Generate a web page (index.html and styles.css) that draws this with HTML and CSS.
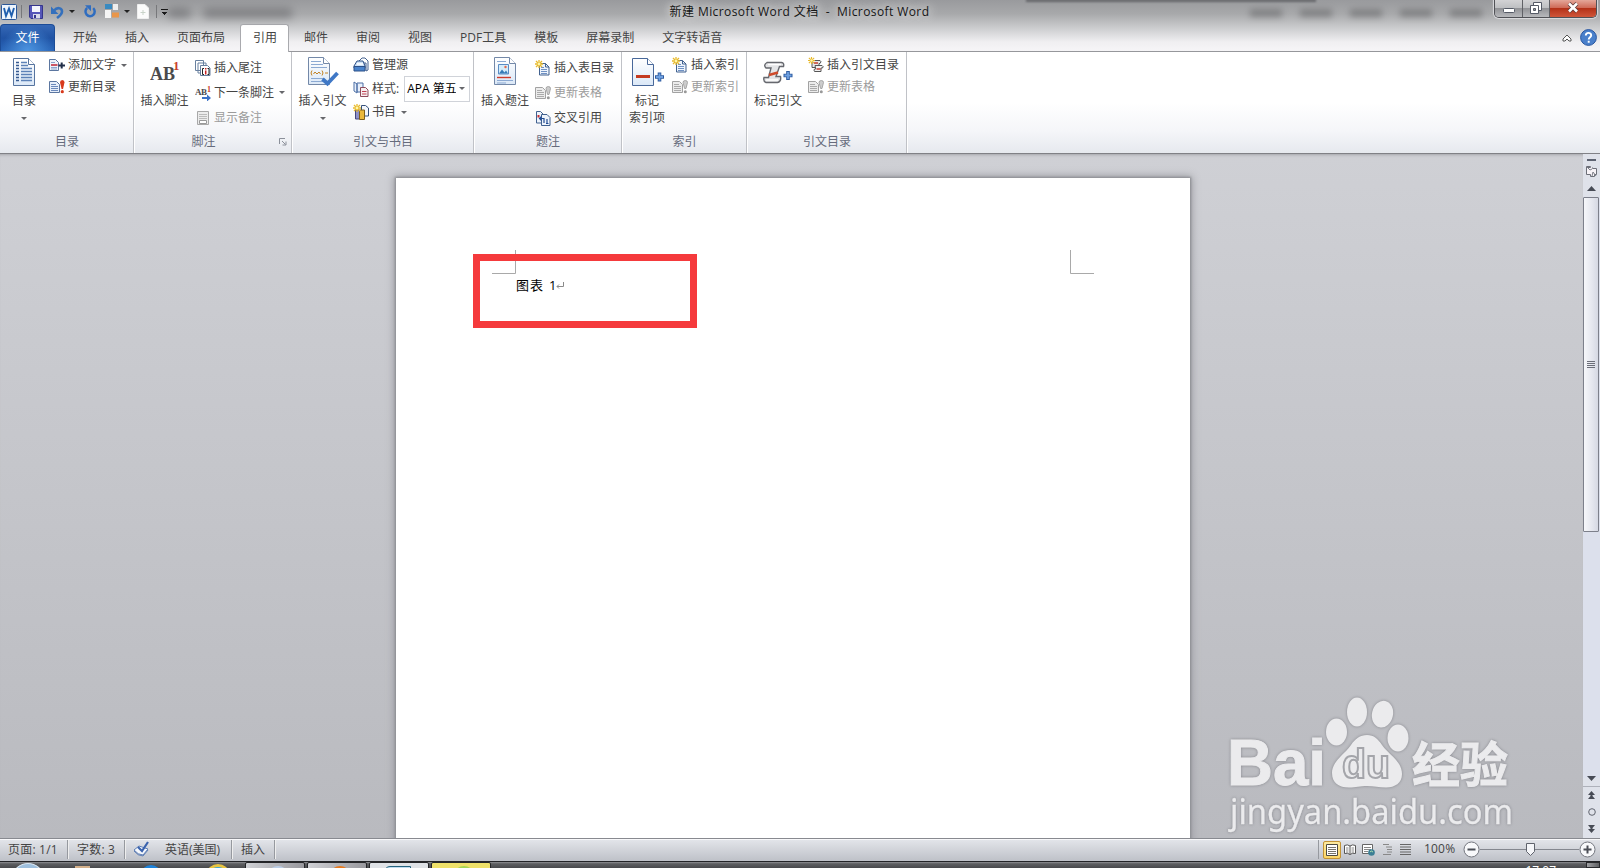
FILE: index.html
```
<!DOCTYPE html>
<html lang="zh-CN">
<head>
  <meta charset="UTF-8">
  <meta name="viewport" content="width=device-width, initial-scale=1.0">
  <title>新建 Microsoft Word 文档 - Microsoft Word</title>
  <link rel="stylesheet" href="styles.css">
</head>
<body>
  <svg class="defs" width="0" height="0">
    <defs>
      <linearGradient id="paper" x1="0" y1="0" x2="0" y2="1">
        <stop offset="0" stop-color="#fff"/><stop offset="1" stop-color="#dbe8f7"/>
      </linearGradient>
      <linearGradient id="blue" x1="0" y1="0" x2="0" y2="1">
        <stop offset="0" stop-color="#7fb0ea"/><stop offset="1" stop-color="#2558a8"/>
      </linearGradient>
      <symbol id="star" viewBox="0 0 8 8"><path d="M4 0v8M0 4h8M1 1l6 6M7 1L1 7" stroke="#e8b92c" stroke-width="1.3"/><circle cx="4" cy="4" r="1.4" fill="#fff6a8"/></symbol>
      <symbol id="add-text" viewBox="0 0 16 14">
        <path d="M.5 1.500h6l3 3v8h-9z" fill="#eef4fb" stroke="#5b76a0"/>
        <path d="M2 4.500h4M2 9.500h6M2 11h6" stroke="#8ba5cc"/><path d="M2 7h6.500" stroke="#c23040" stroke-width="1.600"/>
        <path d="M9.500 7.500H16M12.700 4.500v6" stroke="#222f49" stroke-width="2"/>
      </symbol>
      <symbol id="update" viewBox="0 0 16 14">
        <path d="M.5 1.500h7l3 3v8h-10z" fill="#e6eefa" stroke="#5b76a0"/>
        <path d="M2 4.500h5M2 6.500h7M2 8.500h7M2 10.500h7" stroke="#6b89bb"/>
        <path d="M11 2.500Q11 0 13.300 0t2.200 2.500l-1.500 6.500h-1.400z" fill="#d8391c"/><circle cx="13.300" cy="11.700" r="1.600" fill="#d8391c"/>
      </symbol>
      <symbol id="update-off" viewBox="0 0 16 14">
        <path d="M.5 1.500h7l3 3v8h-10z" fill="#ececec" stroke="#a2a2a2"/>
        <path d="M2 4.500h5M2 6.500h7M2 8.500h7M2 10.500h7" stroke="#aaa"/>
        <path d="M11 2.500Q11 .5 13.300.5t2.200 2l-1.500 6h-1.400z" fill="#ccc" stroke="#999" stroke-width=".8"/><circle cx="13.300" cy="11.700" r="1.500" fill="#999"/>
      </symbol>
      <symbol id="new-list" viewBox="0 0 16 16">
        <path d="M4.500 3.500h6l3.500 3.500v8H4.500z" fill="#eef4fc" stroke="#41618f"/><path d="M10.500 3.500V7H14" fill="none" stroke="#41618f"/>
        <path d="M6 7.500h3M6 9.500h6M6 11.500h6M6 13.500h6" stroke="#6f91c4"/>
        <use href="#star" x="0" y="0" width="8" height="8"/>
      </symbol>
    </defs>
  </svg>

  <header class="titlebar">
    <div class="quick-access">
      <svg width="16" height="16" viewBox="0 0 16 16"><rect x=".5" y=".5" width="15" height="15" rx="1" fill="#eef5fc" stroke="#2b5797"/><path d="M3 4l2 8 3-7.500 2.500 7.500L13 4" fill="none" stroke="#1f5fae" stroke-width="1.900"/></svg>
      <i class="bar"></i>
      <svg class="save" width="14" height="14" viewBox="0 0 14 14"><path d="M.5.500h13v13H2l-1.500-1.500z" fill="#5556b8" stroke="#34358c"/><path d="M3 1h8v6H3z" fill="#f3f5fc"/><path d="M4 9h7v4.500H4z" fill="#d9dcea"/><path d="M5 10h2v3H5z" fill="#34358c"/></svg>
      <svg class="undo" width="13" height="14" viewBox="0 0 13 14"><path d="M3 5.500C6 2 11 2.500 11 6.500c0 3-2.500 4.500-5 6.500" fill="none" stroke="#3470bd" stroke-width="2.600"/><path d="M0 1.500V9h7.500z" fill="#3470bd"/></svg>
      <i class="caret dark"></i>
      <svg class="redo" width="13" height="13" viewBox="0 0 13 13"><path d="M9.200 3.200a4.600 4.600 0 1 1-6-.2" fill="none" stroke="#2f6dc0" stroke-width="2.500"/><path d="M1 .300h6v6z" fill="#2f6dc0"/></svg>
      <svg class="shapes" width="15" height="15" viewBox="0 0 15 15"><rect width="7" height="5" fill="#3a8ac0"/><rect x="0" y="6" width="6" height="8" fill="#f5f5f5"/><rect x="8" y="0" width="5" height="6" fill="#eee"/><rect x="7" y="8.500" width="7" height="5" fill="#e9964a"/></svg>
      <i class="caret dark"></i>
      <svg class="blank" width="12" height="15" viewBox="0 0 12 15"><path d="M.5.500h7.500l3.500 3.500v10.500H.5z" fill="#fbfbfb" stroke="#eee"/><path d="M6 6v5M3.500 8.500h5" stroke="#c9d3c9"/></svg>
      <i class="bar last"></i>
      <i class="more"></i>
    </div>
    <div class="ghost-left"></div>
    <div class="title">新建 Microsoft Word 文档&nbsp; -&nbsp; Microsoft Word</div>
    <div class="ghost-right"><i></i><i></i><i></i><i></i><i></i></div>
    <div class="top-strip"></div>
    <div class="window-buttons">
      <span class="minimize"><svg width="12" height="5"><rect x=".5" y=".5" width="11" height="4" rx="1" fill="#fff" stroke="#555a66"/></svg></span>
      <span class="restore"><svg width="12" height="12"><path d="M3.500 3V.500h8v8H9" fill="#fff" stroke="#555a66"/><path d="M.5 3.500h8v8h-8z" fill="#fff" stroke="#555a66"/><path d="M3.500 6.500h2v2h-2z" fill="#999" stroke="#555a66"/></svg></span>
      <span class="close"><svg width="12" height="11"><path d="M2 1.500l8 8M10 1.500l-8 8" stroke="#5b3a3a" stroke-width="4"/><path d="M2 1.500l8 8M10 1.500l-8 8" stroke="#fff" stroke-width="2.600"/></svg></span>
    </div>
  </header>

  <nav class="tabs">
    <a class="file">文件</a>
    <a>开始</a>
    <a>插入</a>
    <a>页面布局</a>
    <a class="active">引用</a>
    <a>邮件</a>
    <a>审阅</a>
    <a>视图</a>
    <a>PDF工具</a>
    <a>模板</a>
    <a>屏幕录制</a>
    <a>文字转语音</a>
    <div class="tab-tools">
      <svg width="10" height="8" viewBox="0 0 10 8"><path d="M1 5L5 1l4 4v2H7L5 5 3 7H1z" fill="#fff" stroke="#555" /></svg>
      <svg width="17" height="17" viewBox="0 0 17 17"><circle cx="8.500" cy="8.500" r="7.900" fill="#4a80cb" stroke="#2a57a0"/><path d="M5.800 6.500c0-3.600 5.400-3.400 5.400-.3 0 2-2.500 2-2.500 4.300M8.700 11.800v2" fill="none" stroke="#fff" stroke-width="1.900"/></svg>
    </div>
  </nav>

  <section class="ribbon">
    <div class="group toc">
      <div class="tools">
        <div class="big">
          <svg width="24" height="31" viewBox="0 0 24 31"><path d="M1.500 1.500h15l6 6v21h-21z" fill="url(#paper)" stroke="#56749f"/><path d="M16.500 1.500v6h6" fill="#fff" stroke="#56749f"/><path d="M4 5.500h3M4 8.500h3M4 11.500h3M4 14.500h3M4 17.500h3M4 20.500h3M4 23.500h3" stroke="#365a91" stroke-width="1.300"/><path d="M9 5.500h6M9 8.500h7M9 11.500h11M9 14.500h11M9 17.500h11M9 20.500h11M9 23.500h11" stroke="#5d82b7" stroke-width="1.300"/></svg>
          <span>目录</span><i class="caret"></i>
        </div>
        <div class="list two">
          <div class="item"><svg width="16" height="14"><use href="#add-text"/></svg>添加文字<i class="caret"></i></div>
          <div class="item"><svg width="16" height="14"><use href="#update"/></svg>更新目录</div>
        </div>
      </div>
      <div class="name">目录</div>
    </div>

    <div class="group footnotes">
      <div class="tools">
        <div class="big">
          <svg width="30" height="31" viewBox="0 0 30 31"><text class="ab" x="0" y="23" textLength="25">AB</text><text class="ab-one" x="23" y="13">1</text></svg>
          <span>插入脚注</span>
        </div>
        <div class="list three">
          <div class="item"><svg width="16" height="16" viewBox="0 0 16 16"><path d="M.5.500h8v10h-8zM3 3h8v10H3z" fill="#fff" stroke="#68809f"/><path d="M5.500 5.500h7l2.500 2.500v7.500H5.500z" fill="#fff" stroke="#68809f"/><path d="M9 8.500H7.500v6H9M12.500 8.500H14v6h-1.500" fill="none" stroke="#222"/><path d="M10.700 8v1.500M10.700 10.500v4" stroke="#c22" stroke-width="1.500"/></svg>插入尾注</div>
          <div class="item"><svg width="16" height="16" viewBox="0 0 16 16"><text class="ab small" x="0" y="10" textLength="12">AB</text><text class="ab-one small" x="12" y="7">1</text><path d="M7 12h5V9.500l4 3.500-4 3.500V14H7z" fill="#3c72c8"/></svg>下一条脚注<i class="caret"></i></div>
          <div class="item off"><svg width="16" height="16" viewBox="0 0 16 16"><path d="M2.500 1.500h11v13h-11z" fill="#ececec" stroke="#a8a8a8"/><path d="M4 4.500h8M4 6.500h8M4 8.500h8" stroke="#bbb"/><path d="M4.500 10.500h7v3h-7z" fill="#fff" stroke="#999"/></svg>显示备注</div>
        </div>
      </div>
      <div class="name">脚注</div>
      <svg class="launcher" width="8" height="8"><path d="M.5 6V.500H6" fill="none" stroke="#8b909a"/><path d="M3 3l3.500 3.500M7 3.500V7H3.500" fill="none" stroke="#8b909a"/></svg>
    </div>

    <div class="group citations">
      <div class="tools">
        <div class="big">
          <svg width="32" height="31" viewBox="0 0 32 31"><path d="M1.500.500h15l6 6v21h-21z" fill="url(#paper)" stroke="#7388a8"/><path d="M16.500.500v6h6" fill="#fff" stroke="#7388a8"/><path d="M4 4.500h10M4 7.500h12M4 10.500h16M4 21.500h13M4 24.500h12" stroke="#8ba9d2"/><path d="M5 13.500q-2 2.500 0 5M15 13.500q2 2.500 0 5" stroke="#c28324" fill="none"/><path d="M6.500 17l1.500-2 2 2 2-2 1.500 2M18 16h3" stroke="#c28324" fill="none"/><path d="M15.500 22l5 4.500L30.500 16" stroke="#3f78c6" stroke-width="3.800" fill="none"/></svg>
          <span>插入引文</span><i class="caret"></i>
        </div>
        <div class="list mid">
          <div class="item"><svg width="16" height="16" viewBox="0 0 16 16"><path d="M6 4l3-3h3l3 3v9l-2 1V6H6z" fill="#fff" stroke="#44618f"/><path d="M1 9l3-5h6l2 5v2H1z" fill="#cfe2f7" stroke="#2c5088"/><path d="M1 9.500h11v4.500H1z" fill="#4a83cc" stroke="#2c5088"/><path d="M4 7h6" stroke="#fff" stroke-width="1.500"/></svg>管理源</div>
          <div class="item"><svg width="16" height="16" viewBox="0 0 16 16"><path d="M1 1l3 2v9l-3-2zM4 2h6v9H4z" fill="#e8f0fb" stroke="#4c6fa5"/><path d="M7.500 6.500h5l2.500 2.500v6.500H7.500z" fill="#f7eff0" stroke="#8d4b5b"/><path d="M9 10.500h4.500M9 13h4.500" stroke="#c04052"/></svg>样式:<div class="combo"><span>APA 第五</span><i class="caret"></i></div></div>
          <div class="item"><svg width="16" height="16" viewBox="0 0 16 16"><path d="M2.500 6h4v9h-4z" fill="#8e90c8" stroke="#44477f"/><path d="M8.500 1.500h4l3 2.500v8H8.500z" fill="#f2f6fc" stroke="#35507a"/><path d="M6.500 6h5v9.500h-5z" fill="#eab83c" stroke="#80601a"/><use href="#star" x="0" y="0" width="8" height="8"/></svg>书目<i class="caret"></i></div>
        </div>
      </div>
      <div class="name">引文与书目</div>
    </div>

    <div class="group captions">
      <div class="tools">
        <div class="big">
          <svg width="24" height="31" viewBox="0 0 24 31"><path d="M1.500.500h15l6 6v21h-21z" fill="url(#paper)" stroke="#7388a8"/><path d="M16.500.500v6h6" fill="#fff" stroke="#7388a8"/><path d="M4 4.500h9M4 23.500h16M4 26h9" stroke="#8ba9d2"/><path d="M5.500 7.500h10v9.500h-10z" fill="#d5ecfa" stroke="#5a8cc4"/><path d="M6 16.500l3-4 2.500 3 1.500-2 2 3z" fill="#367bb8"/><circle cx="12.500" cy="10" r="1.200" fill="#e0664a"/><path d="M4 20.500h14" stroke="#ce3a2b" stroke-width="1.400"/></svg>
          <span>插入题注</span>
        </div>
        <div class="list three">
          <div class="item"><svg width="16" height="16"><use href="#new-list"/></svg>插入表目录</div>
          <div class="item off"><svg width="16" height="14"><use href="#update-off"/></svg>更新表格</div>
          <div class="item"><svg width="16" height="16" viewBox="0 0 16 16"><path d="M1.500 1.500h4l2.500 2.500v9H1.500z" fill="#eef4fc" stroke="#41618f"/><path d="M6.500 4.500h5.500l3 3v8H6.500z" fill="#eef4fc" stroke="#41618f"/><path d="M2.500 5h2v2.500h-2z" fill="#c42f35"/><path d="M9 13V8.500H4.500M6.500 6.500l-2 2 2 2" stroke="#234d94" stroke-width="1.200" fill="none"/><path d="M12 9v4.500M11 13.500h2.500" stroke="#234d94" stroke-width="1.200"/></svg>交叉引用</div>
        </div>
      </div>
      <div class="name">题注</div>
    </div>

    <div class="group index">
      <div class="tools">
        <div class="big">
          <svg width="33" height="31" viewBox="0 0 33 31"><path d="M1.500 1.500h15l6 6v21h-21z" fill="url(#paper)" stroke="#48689a"/><path d="M16.500 1.500v6h6" fill="#fff" stroke="#48689a"/><path d="M5 19.500h14" stroke="#c43a20" stroke-width="3"/><path d="M28.500 15.500v9M24 20h9" stroke="#2d5a9f" stroke-width="3.600"/><path d="M28.500 16.500v7M25 20h7" stroke="#6ea0e0" stroke-width="1.800"/></svg>
          <span>标记</span><span>索引项</span>
        </div>
        <div class="list two">
          <div class="item"><svg width="16" height="16"><use href="#new-list"/></svg>插入索引</div>
          <div class="item off"><svg width="16" height="14"><use href="#update-off"/></svg>更新索引</div>
        </div>
      </div>
      <div class="name">索引</div>
    </div>

    <div class="group authorities">
      <div class="tools">
        <div class="big">
          <svg width="30" height="31" viewBox="0 0 30 31"><path d="M4 5.500h14.500q3 .5 2 4h-4L13 19.500h4.500q1 5-3 6H3q-3-1-2-5h4.500L8 11H3Q0 8 4 5.500z" fill="#e4e5e7" stroke="#66686e" stroke-width="1.400"/><path d="M5 7.500h13M3 23h12" stroke="#fff" stroke-width="1.500"/><path d="M6 18l9-2.500" stroke="#cf4a2a" stroke-width="2.600"/><path d="M25 14v9M20.500 18.500h9" stroke="#2d5a9f" stroke-width="3.600"/><path d="M25 15v7M21.500 18.500h7" stroke="#6ea0e0" stroke-width="1.800"/></svg>
          <span>标记引文</span>
        </div>
        <div class="list two">
          <div class="item"><svg width="16" height="16" viewBox="0 0 16 16"><path d="M4 3.500h8q2 1 0 3h-1v4H4z" fill="#e8e8ea" stroke="#555"/><path d="M7 8.500h7q2 1 .500 2.500H13v3.500H6.500q-1-1.500 0-2.500h1.200z" fill="#f1f1f1" stroke="#555"/><path d="M6 6h4M8.500 12h4" stroke="#c43b30" stroke-width="1.700"/><use href="#star" x="0" y="0" width="7" height="7"/></svg>插入引文目录</div>
          <div class="item off"><svg width="16" height="14"><use href="#update-off"/></svg>更新表格</div>
        </div>
      </div>
      <div class="name">引文目录</div>
    </div>
  </section>

  <main class="workspace">
    <div class="canvas">
      <article class="page">
        <svg class="corner corner-left" width="24" height="25"><path d="M23.500 0v23.500H0" fill="none" stroke="#a9a9a9"/></svg>
        <svg class="corner corner-right" width="24" height="25"><path d="M.5 0v23.500H24" fill="none" stroke="#a9a9a9"/></svg>
        <p class="caption">图表 <b>1</b><svg width="8" height="7" viewBox="0 0 8 7"><path d="M7.500 0v4.500H1M3 2.500l-2 2 2 2" fill="none" stroke="#8a8a8a"/></svg></p>
        <div class="highlight"></div>
      </article>
      <svg class="watermark" width="300" height="150" viewBox="1220 690 300 150">
        <g fill="#ebebed" stroke="#ebebed">
          <text class="wm-bai" x="1227" y="785" textLength="99" lengthAdjust="spacingAndGlyphs">Bai</text>
          <g stroke="none">
            <ellipse cx="1336.500" cy="732" rx="10.500" ry="13.500"/>
            <ellipse cx="1357" cy="712" rx="10" ry="14.500"/>
            <ellipse cx="1382.500" cy="714" rx="10.500" ry="13.500" transform="rotate(12 1382 714)"/>
            <ellipse cx="1398" cy="738" rx="10.500" ry="13.500"/>
            <path d="M1367 735c7 0 11 4 15 10 6 9 20 16 20 29 0 9-7 13.500-16 13.500-7 0-12-1.500-19-1.500s-11 1.500-18 1.500c-10 0-17-4.500-17-14.500 0-12 13-19 19-28 4-6 9-10 16-10z"/>
          </g>
          <text class="wm-du" x="1342" y="778" textLength="48" lengthAdjust="spacingAndGlyphs">du</text>
          <text class="wm-cn" x="1412" y="782" textLength="96" lengthAdjust="spacingAndGlyphs">经验</text>
          <text class="wm-url" x="1230" y="824" textLength="283" lengthAdjust="spacingAndGlyphs">jingyan.baidu.com</text>
        </g>
      </svg>
    </div>
    <aside class="scrollbar">
      <i class="split"></i>
      <svg class="ruler" width="13" height="13"><path d="M1.500 2.500h4v-1h-4v8h4v2h4v-2h2v-6h-4v-1" fill="#f7f3f7" stroke="#6c6f78"/><path d="M2 2l3 3 2-1M7 11l1-4 3 4" fill="none" stroke="#7b7e87"/></svg>
      <svg class="arrow-up" width="9" height="5"><path d="M0 5l4.500-5L9 5z" fill="#474b55"/></svg>
      <div class="track"><div class="thumb"><i></i><i></i><i></i><i></i></div></div>
      <svg class="arrow-down" width="9" height="5"><path d="M0 0l4.500 5L9 0z" fill="#474b55"/></svg>
      <div class="browse">
        <svg width="7" height="8"><path d="M0 4l3.500-4L7 4H4.500v1L7 8H0l2.500-3V4z" fill="#474b55"/></svg>
        <svg width="8" height="8"><circle cx="4" cy="4" r="3.300" fill="none" stroke="#60646e"/></svg>
        <svg width="7" height="8"><path d="M0 0h7L4.500 3v1H7L3.500 8 0 4h2.500V3z" fill="#474b55"/></svg>
      </div>
    </aside>
  </main>

  <footer class="statusbar">
    <span class="cell pages">页面: 1/1</span>
    <span class="cell words">字数: 3</span>
    <span class="cell lang"><svg width="17" height="16" viewBox="0 0 17 16"><path d="M1 9l5-4 9 3-5 6q-5 0-9-5z" fill="#f5f8fd" stroke="#5f7fb5"/><path d="M1 10q4 5 9 5l5-6" fill="none" stroke="#5f7fb5"/><path d="M5 6l4 4 6-9" fill="none" stroke="#3b63ae" stroke-width="2.200"/></svg>英语(美国)</span>
    <span class="cell mode">插入</span>
    <div class="views">
      <span class="view on"><svg width="12" height="12"><path d="M.5.500h11v11H.5z" fill="#fff" stroke="#4d4a40"/><path d="M2 3.500h8M2 5.500h8M2 7.500h8M2 9.500h8" stroke="#77756c"/></svg></span>
      <span class="view"><svg width="12" height="11"><path d="M.5 1.500q3-1.500 5.500.5 2.500-2 5.500-.5v8q-3-1-5.500 1-2.500-2-5.500-1zM6 2v8.500" fill="#fff" stroke="#555"/><path d="M2 4h2.500M2 6h2.500M2 8h2.500M7.500 4H10M7.500 6H10M7.500 8H10" stroke="#888"/></svg></span>
      <span class="view"><svg width="13" height="12"><path d="M.5.500h10v9H.5z" fill="#fff" stroke="#666"/><path d="M2 3.500h7M2 5.500h7M2 7.500h4" stroke="#888"/><circle cx="9.500" cy="8.500" r="3.300" fill="#3c7f95"/><path d="M8 8q1-2 3 0" stroke="#aedfb0" fill="none"/></svg></span>
      <span class="view"><svg width="11" height="11"><path d="M1 .5h6M4 3h6M5 5.500h5M5 8h5M1 10.500h8" stroke="#888"/></svg></span>
      <span class="view"><svg width="11" height="11"><path d="M0 .5h11M0 3h11M0 5.500h11M0 8h11M0 10.500h11" stroke="#666"/></svg></span>
    </div>
    <span class="zoom-value">100%</span>
    <div class="zoom">
      <svg width="17" height="17"><circle cx="8.500" cy="8.500" r="7.500" fill="#f8f9fb" stroke="#74777f"/><path d="M4.500 8.500h8" stroke="#4b4e56" stroke-width="2"/></svg>
      <div class="rail"><svg width="9" height="13"><path d="M.5.500h8v8l-4 4-4-4z" fill="#f5f6f9" stroke="#5f636c"/></svg></div>
      <svg width="17" height="17"><circle cx="8.500" cy="8.500" r="7.500" fill="#f8f9fb" stroke="#74777f"/><path d="M4.500 8.500h8M8.500 4.500v8" stroke="#4b4e56" stroke-width="2"/></svg>
    </div>
  </footer>

  <div class="taskbar">
    <div class="pins"><i class="start"></i><i class="folder"></i><i class="browser"></i><i class="ie"></i></div>
    <span class="task"><i class="disc"></i></span>
    <span class="task"><i class="fox"></i></span>
    <span class="task bright"><i class="doc"></i></span>
    <span class="task yellow"><i class="green"></i></span>
    <span class="clock">17:07</span>
    <span class="desktop"></span>
  </div>
</body>
</html>
```
FILE: styles.css
```
* {
  box-sizing: border-box;
}

body {
  margin: 0;
  width: 1600px;
  height: 868px;
  overflow: hidden;
  display: flex;
  flex-direction: column;
  font-family: "Open Sans", "Noto Sans CJK SC", sans-serif;
  font-size: 12px;
  color: #444;
  background: linear-gradient(#999a9d 0, #a8a9ab 14px, #c6c7c9 26px, #f0eff1 42px, #f6f5f7 51px);
}

svg {
  flex: none;
  display: block;
}

.defs {
  position: absolute;
}

/* title bar */
.titlebar {
  position: relative;
  height: 24px;
  flex: none;
}

.quick-access {
  display: flex;
  align-items: center;
  height: 23px;
  padding-left: 1px;
}

.bar {
  width: 1px;
  height: 13px;
  margin-left: 4px;
  background: #77787b;
}

.bar.last {
  margin-left: 7px;
}

.save {
  margin-left: 7px;
}

.undo {
  margin-left: 8px;
}

.redo {
  margin-left: 9px;
}

.shapes {
  margin-left: 8px;
}

.blank {
  margin-left: 7px;
}

.caret {
  flex: none;
  width: 0;
  height: 0;
  border: 3px solid transparent;
  border-top-color: #66676b;
  border-bottom-width: 0;
}

.caret.dark {
  margin-left: 5px;
  border-top-color: #222;
}

.shapes + .caret {
  margin-left: 4px;
}

.more {
  width: 7px;
  height: 6px;
  margin-left: 4px;
  border-top: 1px solid #111;
  background: linear-gradient(#111, #111) center 2px / 5px 1px no-repeat, linear-gradient(#111, #111) center 3px / 3px 1px no-repeat, linear-gradient(#111, #111) center 4px / 1px 1px no-repeat;
}

.title {
  position: absolute;
  left: 0;
  right: 0;
  top: 2px;
  padding-right: 1px;
  text-align: center;
  font-size: 12px;
  line-height: 20px;
  color: #151515;
  letter-spacing: .41px;
  text-shadow: 0 0 8px #eee, 0 0 12px #ddd;
}

.ghost-left {
  position: absolute;
  left: 168px;
  top: 8px;
  width: 124px;
  height: 10px;
  background: linear-gradient(90deg, #66676a 22px, transparent 22px 36px, #66676a 36px);
  filter: blur(4px);
  opacity: .6;
}

.ghost-right {
  position: absolute;
  left: 1250px;
  top: 9px;
  display: flex;
  gap: 18px;
  filter: blur(3px);
  opacity: .6;
}

.ghost-right i {
  width: 32px;
  height: 8px;
  background: #68696b;
}

.top-strip {
  position: absolute;
  left: 1026px;
  top: -1px;
  width: 290px;
  height: 3px;
  background: #66676b;
  filter: blur(1px);
}

.window-buttons {
  position: absolute;
  right: 3px;
  top: 0;
  display: flex;
  width: 103px;
  height: 18px;
  border: 1px solid #505156;
  border-top: 0;
  border-radius: 0 0 5px 5px;
  overflow: hidden;
  box-shadow: 0 0 1px 1px #dcdcdf;
}

.window-buttons span {
  display: flex;
  justify-content: center;
  align-items: center;
  width: 27px;
  padding-bottom: 2px;
  border-right: 1px solid #606166;
  background: linear-gradient(#d3d3d5 0, #bdbec1 48%, #929397 50%, #b8b9bc 100%);
}

.window-buttons .minimize {
  width: 28px;
  padding: 4px 0 0;
}

.window-buttons .close {
  flex: 1;
  border: 0;
  background: linear-gradient(#e4a79a 0, #cf6a57 46%, #b43219 50%, #d0563a 100%);
}

/* tabs */
.tabs {
  display: flex;
  flex: none;
  height: 28px;
  border-bottom: 1px solid #96979b;
}

.tabs a {
  padding: 0 14px;
  line-height: 27px;
  white-space: nowrap;
}

.tabs .file {
  width: 55px;
  margin-right: 4px;
  padding: 0;
  text-align: center;
  color: #fff;
  border: 1px solid #1c4c97;
  border-bottom: 0;
  border-radius: 4px 4px 0 0;
  line-height: 26px;
  background: radial-gradient(ellipse at 50% 100%, #4c94e0 0, transparent 70%), linear-gradient(#3568b6, #2053a4 50%, #2a66b9);
}

.tabs .active {
  height: 28px;
  margin: 0 1px;
  padding: 0 11px 0 12px;
  border: 1px solid #a9aaae;
  border-bottom: 0;
  border-radius: 3px 3px 0 0;
  background: #fff;
  line-height: 26px;
}

.tab-tools {
  display: flex;
  align-items: center;
  gap: 8px;
  margin-left: auto;
  padding-right: 3px;
}

/* ribbon */
.ribbon {
  display: flex;
  flex: none;
  height: 102px;
  border-bottom: 1px solid #808186;
  background: linear-gradient(#fff 0, #fff 50%, #f5f6f9 78%, #e6e9ee 100%);
}

.group {
  position: relative;
  display: flex;
  flex-direction: column;
  border-right: 1px solid #c0c2c7;
  box-shadow: 1px 0 #fff;
}

.toc { width: 134px; }
.footnotes { width: 158px; }
.citations { width: 182px; }
.captions { width: 148px; }
.index { width: 125px; }
.authorities { width: 160px; }

.tools {
  display: flex;
  height: 81px;
}

.big {
  display: flex;
  flex-direction: column;
  align-items: center;
  flex: none;
  padding-top: 5px;
  line-height: 17px;
  white-space: nowrap;
}

.big svg {
  margin-bottom: 4px;
}

.big .caret {
  margin-top: 8px;
}

.toc .big { width: 48px; }
.footnotes .big { width: 61px; }
.citations .big { width: 60px; padding-left: 1px; }
.captions .big { width: 61px; padding-left: 1px; }
.index .big { width: 49px; padding-left: 1px; }
.authorities .big { width: 60px; padding-left: 2px; }

.list {
  display: flex;
  flex-direction: column;
  line-height: 22px;
}

.list.two { padding-top: 2px; }
.list.three { padding-top: 3px; }
.list.mid { padding: 1.5px 0 0 1px; }
.list.three .item { height: 25px; }
.list.mid .item { height: 23.5px; }
.toc .list { padding-left: 1px; }
.index .list { padding-left: 1px; }
.authorities .list { padding-left: 1px; }

.item {
  display: flex;
  align-items: center;
  height: 22px;
  white-space: nowrap;
}

.item > svg {
  margin-right: 3px;
}

.item > .caret {
  margin-left: 5px;
}

.off {
  color: #9b9b9b;
}

.combo {
  display: flex;
  align-items: center;
  justify-content: space-between;
  width: 66px;
  height: 26px;
  margin-left: 5px;
  padding: 0 4px 0 2px;
  border: 1px solid #d0d3d9;
  background: #fff;
  color: #000;
}

.combo span {
  width: 49px;
  overflow: hidden;
}

.name {
  text-align: center;
  line-height: 22px;
  color: #666b7c;
  padding-left: 1px;
}

.footnotes .name {
  padding-right: 19px;
}

.launcher {
  position: absolute;
  right: 4px;
  bottom: 7px;
}

.ab {
  font-family: "Liberation Serif", serif;
  font-size: 18px;
  font-weight: bold;
  fill: #4a4a4c;
}

.ab-one {
  font-family: "Liberation Serif", serif;
  font-size: 13px;
  font-weight: bold;
  fill: #c9402a;
}

.ab.small { font-size: 9px; }
.ab-one.small { font-size: 8px; }

/* document area */
.workspace {
  display: flex;
  height: 685px;
  flex: none;
  border-bottom: 1px solid #888a90;
  background: linear-gradient(#cfd0d5, #b9babf);
}

.canvas {
  position: relative;
  flex: 1;
  overflow: hidden;
  padding-top: 24px;
  box-shadow: inset 0 3px 3px -2px #a5a6ab;
}

.page {
  position: relative;
  width: 794px;
  height: 900px;
  margin-left: 396px;
  padding: 96px 0 0 120px;
  background: #fff;
  box-shadow: 0 0 2px 1px #8c8d92, 0 0 8px 2px #9a9ba1;
}

.caption {
  display: flex;
  align-items: center;
  margin: 0;
  font-size: 13px;
  line-height: 22px;
  letter-spacing: 1px;
  color: #000;
}

.caption b {
  margin-left: 5px;
  font-weight: normal;
  letter-spacing: 0;
}

.corner {
  position: absolute;
  top: 72px;
}

.corner-left { left: 96px; }
.corner-right { left: 674px; }

.highlight {
  position: absolute;
  left: 77px;
  top: 76px;
  width: 224px;
  height: 74px;
  border: 7px solid #f53a3c;
}

.watermark {
  position: absolute;
  left: 1220px;
  top: 536px;
  overflow: visible;
  filter: drop-shadow(0 0 1.5px #85868c);
}

.wm-bai {
  font: bold 64px "Liberation Sans", sans-serif;
  stroke-width: 1px;
}

.wm-du {
  font: bold 40px "Liberation Sans", sans-serif;
  stroke: #a4a5aa;
  stroke-width: 2px;
}

.wm-cn {
  font: bold 48px "Noto Sans CJK SC", sans-serif;
  stroke-width: 1px;
}

.wm-url {
  font: 34px "Noto Sans", sans-serif;
  stroke-width: .3px;
}

/* scrollbar */
.scrollbar {
  display: flex;
  flex-direction: column;
  align-items: center;
  width: 17px;
  background: #dfe2ea;
}

.split {
  width: 9px;
  height: 2px;
  margin-top: 5px;
  background: #5d6371;
}

.ruler {
  margin-top: 4px;
}

.arrow-up {
  margin: 8px 0 6px;
}

.track {
  width: 17px;
  height: 581px;
  background: #dce0ec;
}

.thumb {
  display: flex;
  flex-direction: column;
  align-items: center;
  justify-content: center;
  gap: 1px;
  width: 16px;
  height: 335px;
  border: 1px solid #7d808b;
  border-radius: 1px;
  background: linear-gradient(90deg, #f6f7fa, #e4e6ee 60%, #d5d8e3);
}

.thumb i {
  width: 8px;
  height: 1px;
  background: #6b6e78;
}

.arrow-down {
  margin: -2px 0 5px;
}

.browse {
  display: flex;
  flex-direction: column;
  align-items: center;
  gap: 9px;
  width: 17px;
  flex: 1;
  padding-top: 4px;
  border-top: 1px solid #aeb1ba;
}

/* status bar */
.statusbar {
  display: flex;
  align-items: center;
  flex: none;
  height: 22px;
  padding-bottom: 2px;
  border-top: 1px solid #f8f8fa;
  background: linear-gradient(#e2e4e9, #bec1c8);
}

.cell {
  display: flex;
  align-items: center;
  height: 19px;
  padding-left: 9px;
  border-right: 1px solid #96999f;
  box-shadow: 1px 0 #eee;
  white-space: nowrap;
}

.cell,
.zoom-value {
  padding-bottom: 2px;
}

.pages { width: 68px; padding-left: 8px; letter-spacing: .2px; }
.words { width: 57px; letter-spacing: .2px; }
.lang { width: 107px; padding-left: 8px; }
.mode { width: 43px; }

.lang svg {
  margin-right: 15px;
}

.views {
  display: flex;
  align-items: center;
  margin-left: auto;
  padding-left: 4px;
  height: 19px;
  border-left: 1px solid #96999f;
}

.view {
  display: flex;
  align-items: center;
  justify-content: center;
  width: 18.5px;
  height: 18px;
}

.view.on {
  border: 1px solid #c39334;
  border-radius: 2px;
  background: linear-gradient(#fdeaa0, #fbd667);
}

.zoom-value {
  width: 33px;
  margin-left: 9px;
  letter-spacing: .2px;
}

.zoom {
  display: flex;
  align-items: center;
  width: 133px;
  margin-left: 6px;
  margin-right: 4px;
}

.rail {
  display: flex;
  align-items: center;
  flex: 1;
  height: 14px;
  padding-left: 46px;
  background: linear-gradient(#84878f, #84878f) center / 100% 1px no-repeat;
}

/* taskbar */
.taskbar {
  display: flex;
  flex: none;
  height: 7px;
  border-top: 1px solid #222326;
  overflow: hidden;
  background: linear-gradient(#909195 0, #5d5e61 30%, #48494c);
}

.pins {
  position: relative;
  width: 245px;
}

.pins i {
  position: absolute;
}

.start {
  left: 13px;
  top: 1px;
  width: 30px;
  height: 26px;
  border-radius: 50%;
  background: #9fc0de;
  border: 1px solid #dbe8f3;
}

.folder {
  left: 75px;
  top: 4px;
  width: 15px;
  height: 4px;
  background: #d5b18b;
}

.browser {
  left: 141px;
  top: 3px;
  width: 20px;
  height: 18px;
  border-radius: 50%;
  background: #1d83dc;
}

.ie {
  left: 207px;
  top: 2px;
  width: 22px;
  height: 18px;
  border-radius: 50%;
  border: 3px solid #e9c542;
  background: #36a6df;
}

.task {
  width: 60px;
  height: 20px;
  margin-right: 2px;
  padding: 3px 0 0 22px;
  border: 1px solid #242528;
  border-radius: 2px;
  background: linear-gradient(90deg, #d0d1d5, #99999e);
}

.task.bright {
  background: #dfe2e6;
}

.task.yellow {
  background: #efe16a;
}

.task i {
  display: block;
  width: 20px;
  height: 18px;
  border-radius: 50%;
}

.disc { background: #bccfe8; }
.fox { background: #e87a1d; }
.green { background: #a6d653; }

.task .doc {
  width: 27px;
  margin-left: -8px;
  border: 1px solid #24637e;
  border-radius: 6px 0 0 0;
  background: #c0dcf0;
}

.clock {
  margin-left: auto;
  padding-top: 2px;
  line-height: 14px;
  color: #fff;
}

.desktop {
  width: 14px;
  margin-left: 30px;
  border: 1px solid #28292c;
  background: linear-gradient(90deg, #9fa0a3, #5e5f62);
}
```
